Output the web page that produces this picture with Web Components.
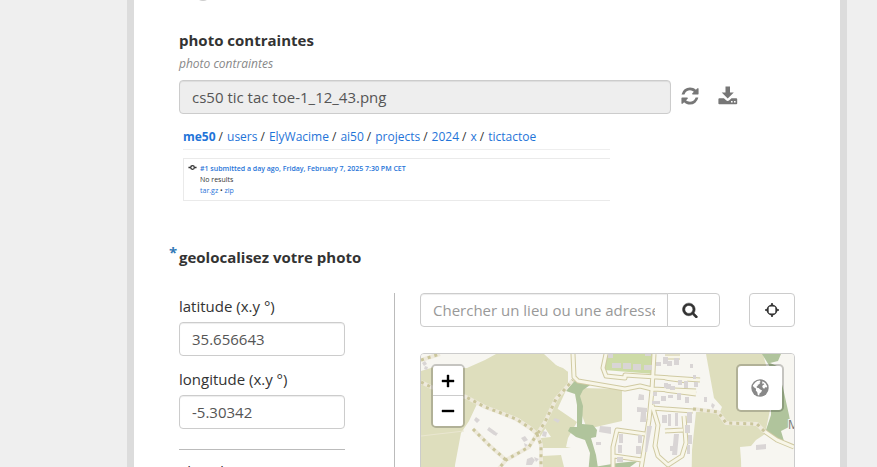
<!DOCTYPE html>
<html lang="fr">
<head>
<meta charset="utf-8">
<title>Formulaire photo</title>
<style>
html,body{margin:0;height:100%;background:#efefef}
body{font-family:"Open Sans","Noto Sans",sans-serif;font-size:15px;line-height:20px;color:#333}
</style>
</head>
<body>
<form-page>
  <photo-question></photo-question>
  <geo-question></geo-question>
</form-page>
<script>
const define=(name,html)=>customElements.define(name,class extends HTMLElement{
  constructor(){super();const t=document.createElement('template');
    t.innerHTML='<style>*{box-sizing:border-box}</style>'+html;
    this.attachShadow({mode:'open'}).append(t.content.cloneNode(true));}
});

const ICONS={
refresh:['0 0 1792 1792','<path d="M1639 1056q0 5-1 7-64 268-268 434.5T892 1664q-146 0-282.500-55T366 1452l-129 129q-19 19-45 19t-45-19-19-45v-448q0-26 19-45t45-19h448q26 0 45 19t19 45-19 45l-137 137q71 66 161 102t187 36q134 0 250-65t186-179q11-17 53-117 8-23 30-23h192q13 0 22.500 9.500t9.500 22.500zm25-800v448q0 26-19 45t-45 19h-448q-26 0-45-19t-19-45 19-45l138-138Q1097 384 896 384q-134 0-250 65T460 628q-11 17-53 117-8 23-30 23H178q-13 0-22.500-9.500T146 736v-7q65-268 270-434.500T896 128q146 0 284 55.500T1425 340l130-129q19-19 45-19t45 19 19 45z"/>'],
download:['0 0 20 20','<path d="M7.500 .5h4.500V6.500h3.800L9.700 12.500 3.700 6.500h3.800z"/><path fill-rule="evenodd" d="M1.400 12.300h4.500l2.200 2q1.600 1.200 3.200 0l2.200-2h4.700q1 0 1 1v4.200q0 .8-1 .8H1.400q-1 0-1-.8v-4.200q0-1 1-1zM13 15v1.400h1.600V15zM16 15v1.400h1.600V15z"/>'],
search:['0 0 1792 1792','<path stroke="currentColor" stroke-width="60" d="M1216 832q0-185-131.500-316.500T768 384 451.500 515.500 320 832t131.500 316.500T768 1280t316.500-131.500T1216 832zm512 832q0 52-38 90t-90 38q-54 0-90-38l-343-342q-179 124-399 124-143 0-273.500-55.500t-225-150-150-225T64 832t55.500-273.500 150-225 225-150T768 128t273.500 55.500 225 150 150 225T1472 832q0 220-124 399l343 343q37 37 37 90z"/>'],
locate:['0 0 16 16','<circle cx="8" cy="8" r="4.700" fill="none" stroke="currentColor" stroke-width="1.500"/><path d="M7.200 1h1.600v1.400L10.200 4v.6H5.800V4l1.400-1.600zM7.200 15h1.600v-1.400l1.400-1.600v-.6H5.800v.6l1.400 1.600zM1 7.200v1.600h1.400L4 10.200h.6V5.800H4L2.400 7.200zM15 7.200v1.600h-1.400L12 10.200h-.6V5.800h.6l1.600 1.400z"/>'],
globe:['0 0 18 18','<circle cx="9" cy="9" r="8.700"/><path fill="#fff" d="M4.200 3.600 6.200 2l2.500-.5 1 .8-1.300.9 1 .6-1.500 1.600-1.300.4.300 1-1.300.7.300 1.300 1.700.3 1.600 1.300 1.800.8-.8 2-1.500 1-.6 2.400-1.300-.6-.5-2.800-1.500-1.800.3-1.700L2.600 8 1.800 6.500zM11.500 2.200l2.800 1.700 1.900 3.400-.5 1.200-1.600-.2-.8 1.400-1.400-.7-.7-1.800.8-1.300 1.400-.5-1.100-1.100-1.300.4z"/>'],
commit:['0 0 10 10','<circle cx="5" cy="5" r="2" fill="none" stroke="currentColor" stroke-width="1.400"/><path d="M.5 4.300h2.500v1.400H.5zM7 4.300h2.500v1.400H7z"/>']
};
customElements.define('form-icon',class extends HTMLElement{
  connectedCallback(){const [box,shape]=ICONS[this.getAttribute('name')];
    const root=this.shadowRoot||this.attachShadow({mode:'open'});
    root.innerHTML=`<style>:host{display:inline-flex;width:var(--size,16px);height:var(--size,16px);flex:none}svg{width:100%;height:100%;fill:currentColor}</style><svg viewBox="${box}" aria-hidden="true">${shape}</svg>`;}
});

define('form-page',`<style>
:host{display:block;height:100vh;overflow:hidden;padding:0 30px 0 127px}
main{background:#fff;border:solid #dcdcdc;border-width:0 7px;padding:0 45px;min-height:100%}
.drop{display:block;width:16px;height:16px;margin:-15px 0 0 16px;border-radius:50%;background:#ccc}
</style><main><span class="drop"></span><slot></slot></main>`);

define('photo-question',`<style>
:host{display:block;padding-top:29px}
label{display:block;font-weight:700}
.hint{font-size:12px;font-style:italic;color:#888;line-height:16px;margin-top:6px}
.row{display:flex;align-items:center;margin-top:8px}
input{flex:1;min-width:0;height:34px;padding:0 12px;border:1px solid #ccc;border-radius:4px;background:#eee;font:inherit;color:#555;box-shadow:inset 0 1px 1px #00000013}
button{border:0;background:none;padding:0;color:#777;display:flex;width:20px;--size:20px}
.refresh{margin:-2px 0 0 9px}.download{margin:-3px 57px 0 18px}
</style>
<label for="file">photo contraintes</label>
<div class="hint">photo contraintes</div>
<div class="row"><input id="file" readonly value="cs50 tic tac toe-1_12_43.png">
<button class="refresh" aria-label="Réinitialiser"><form-icon name="refresh"></form-icon></button>
<button class="download" aria-label="Télécharger"><form-icon name="download"></form-icon></button></div>
<photo-preview></photo-preview>`);

define('photo-preview',`<style>
:host{display:block;margin:12px 185px 0 4px;color:#333}
a{color:#1f74d8;text-decoration:none}
nav{display:flex;font-size:12px;line-height:20px;padding-top:1px;height:24px;border-bottom:1px solid #eee;white-space:nowrap}
nav span{margin:0 4px 0 3px}
nav a:first-child{font-weight:700}
.title{font-weight:600}
.card{display:flex;gap:3px;margin-top:8px;border:solid #eaeaea;border-width:1px 0 1px 1px;height:43px;padding:4px;font-size:7px;line-height:11px;white-space:nowrap}
form-icon{--size:9px}
.card div div{height:11px}
</style>
<nav><a href="#">me50</a><span>/</span><a href="#">users</a><span>/</span><a href="#">ElyWacime</a><span>/</span><a href="#">ai50</a><span>/</span><a href="#">projects</a><span>/</span><a href="#">2024</a><span>/</span><a href="#">x</a><span>/</span><a href="#">tictactoe</a></nav>
<div class="card"><form-icon name="commit"></form-icon><div>
<div><a class="title" href="#">#1 submitted a day ago, Friday, February 7, 2025 7:30 PM CET</a></div>
<div>No results</div><div><a href="#">tar.gz</a> • <a href="#">zip</a></div></div></div>`);

define('geo-question',`<style>
:host{display:block;margin-top:46px}
h2{position:relative;margin:0;font-size:15px;line-height:20px;font-weight:700}
h2 span{position:absolute;left:-10px;top:-5px;color:#337ab7}
.grid{display:grid;grid-template-columns:216px 1fr;gap:25px;margin-top:26px}
.fields{border-right:1px solid #bbb;padding:3px 49px 0 0;height:280px}
label{display:block;margin-bottom:6px}
input{width:100%;min-width:0;height:34px;padding:0 12px;border:1px solid #ccc;border-radius:4px;background:#fff;font:inherit;color:#555;box-shadow:inset 0 1px 1px #00000013}
.fields input{display:block;margin-bottom:13px}
.fields .last{margin-top:20px;padding-top:11px;border-top:1px solid #bbb}
.search{display:flex}
.search input{flex:1;border-radius:4px 0 0 4px}
input::placeholder{color:#999;opacity:1}
button{display:flex;align-items:center;justify-content:center;height:34px;border:1px solid #ccc;background:#fff;color:#333;padding:0}
.find{width:53px;margin-left:-1px;border-radius:0 4px 4px 0;padding-right:8px}
.locate{width:46px;margin-left:29px;border-radius:4px}
</style>
<h2><span>*</span>geolocalisez votre photo</h2>
<div class="grid"><div class="fields">
<label for="lat">latitude (x.y °)</label><input id="lat" value="35.656643">
<label for="lon">longitude (x.y °)</label><input id="lon" value="-5.30342">
<div class="last"><label for="alt">altitude (m)</label><input id="alt"></div></div>
<div class="side"><div class="search"><input aria-label="Chercher un lieu" placeholder="Chercher un lieu ou une adresse">
<button class="find" aria-label="Chercher"><form-icon name="search"></form-icon></button>
<button class="locate" aria-label="Me localiser"><form-icon name="locate"></form-icon></button></div>
<map-view></map-view></div></div>`);

const ROADS='M573 354 574 377 578 381 625 389 640 386 652 389 696 391M606 354 603 368 606 376 625 378 625 375 700 380M654 354 652 390 649 420 640 475M665 357 680 357M665 378 687 381M665 390 696 394M613 475V447L617 430 645 434M614 456 642 460M652 405 658 425 655 446 658 456 668 465 682 456 686 443 684 416M652 408 693 411M665 431 683 430M764 431 777 440 794 447';
const TRACKS='M421 382 431 387 466 397 485 407 501 413 516 419 530 428 537 434 529 447 506 460 491 478M421 360 440 354M473 429 490 446 506 460M537 434 541 445 541 478M538 433 545 422 556 399 573 380M693 409 718 412 726 423 757 424 765 432';
define('map-view',`<style>
:host{display:block;position:relative;margin-top:26px;height:220px;border:1px solid #ccc;border-radius:4px;overflow:hidden;background:#f7f6f1}
.map{display:block;width:100%;height:100%}
.zoom,.layers{position:absolute;top:10px;border:2px solid #00000033;background-clip:padding-box;border-radius:5px}
.zoom{left:10px;width:34px;overflow:hidden}
.zoom button{display:flex;align-items:center;justify-content:center;width:30px;height:30px;padding:0;border:0;background:#fff;color:#000}
.zoom button:first-child{border-bottom:1px solid #ccc}
.zoom svg{width:14px;height:14px}
.layers{right:10px;width:48px;height:48px;background-color:#fff;display:flex;align-items:center;justify-content:center;padding:0;color:#888;--size:18px}
</style>
<svg class="map" viewBox="421 354 373 218" preserveAspectRatio="xMinYMin slice" aria-label="Carte">
<rect x="421" y="354" width="373" height="218" fill="#f7f6f1"/>
<g fill="#dedebd">
<path d="M421 371 434 367 467 368 485 360 496 354H544L556 365 568 372 565 384 552 406 538 433 520 419 503 412 477 404 469 421 461 433 455 465 451 572H421z"/>
<path d="M540 354 548 363 563 368 568 372 568 386 557 410 540 437z"/>
<path d="M580 388 622 389V421L587 429 580 410z"/>
<path d="M555 407 577 422 568 438 566 447 571 448 542 448 541 438 551 437 545 428z"/>
<path d="M543 456 561 455 566 475 543 475z"/>
<path d="M706 354H763L770 380 770 410 765 434 756 440 751 446 740 447 741 460 744 572H690L692 450 696 412H720L722 407 714 398z"/>
</g>
<path fill="#cddba6" d="M608 354H654V374L604 370z"/>
<g fill="#b0c49c"><path d="M566 391 574 381 593 383 583 390 580 396 583 406 582 424 593 425 597 430 596 437 591 438 596 455 599 475H588L590 453 585 440 576 437 568 431 570 427 577 427 577 405 575 394z"/>
<path d="M762 354H781L778 361 770 363 777 366 783 388 789 415 791 426 781 431 784 441 765 433 771 415 770 367z"/>
<path d="M594 467 618 463 638 461 630 467z"/></g>
<g fill="none" stroke-linejoin="round">
<path stroke="#d0caa2" stroke-width="5" d="${ROADS}"/>
<path stroke="#f8f6e8" stroke-width="3" d="${ROADS}"/>
<path stroke="#eeeadc" stroke-width="4" d="${TRACKS}"/>
<path stroke="#cbc69c" stroke-width="3" stroke-dasharray="3 4" d="${TRACKS}"/>
<path stroke="#e9e6d0" d="M421 436 464 431"/></g>
<g fill="#d9d5d5">
<path d="m422 363 3-2 2 3-3 2zM425 366l3 1-1 3-3-1zM476 417l4 3-3 3-3-3zM489 427l7 5-2 3-7-5zM495 432l3 1-2 3-3-2zM521 438l4-2 3 4-4 2zM524 443l4 2-3 2zM527 459l5-2 3 3-3 5h-6zM534 457l5 2-3 3zM555 418l5 2-2 3-5-3zM543 431l4 1-1 5-4-1zM600 426l11 1v7l-12-2zM596 442h5v3h-5zM617 457h6v5h-6z"/>
<path d="M612 363h9v5h-9zM623 363h8v6h-8zM633 364h8v6h-8zM644 365h8v5h-8zM608 354h5v4h-5zM645 354h6v2h-6zM639 394l5 1v5h-6zM637 407l10 1v4h-10zM641 412h5v10h-6zM656 362h5v4h-5zM663 357h5v7h-5zM664 383h4v5h-4zM653 392h4v4h-4zM661 396h5v5h-5zM652 401h8v3h-8zM647 426h5l-5 26h-2zM619 434h4v9h-4zM618 445h4v8h-4zM638 435h4v8h-4zM636 446h5v8h-5zM662 415h5v8h-5zM690 364h3v4h-3zM667 361h5v5h-5zM674 358h5v7h-5zM670 386h5v4h-5zM678 380h4v5h-4zM684 381h4v7h-4zM693 375h3v4h-3zM694 382h4v5h-4zM668 395h5v3h-5zM677 393h4v7h-4zM685 397h4v6h-4zM704 397h3v5h-3zM712 403l3 2-2 4-2-3zM668 414h3v12h-3zM675 413h3v13h-3zM687 412h5v11h-5zM685 425h5v8h-5zM688 435h4v9h-4zM674 434h5l-2 21h-5zM670 446h5v5h-5zM687 445h3v9h-3zM666 384h5v5h-5zM756 445l10-1v5l-10 1z"/></g>
<text x="788" y="429" font-size="12" fill="#777" stroke="#f7f6f1" stroke-width="2" paint-order="stroke">M</text>
</svg>
<div class="zoom"><button aria-label="Zoom avant"><svg viewBox="0 0 14 14"><path d="M6 1h2v5h5v2H8v5H6V8H1V6h5z" stroke="#000" stroke-width=".4"/></svg></button><button aria-label="Zoom arrière"><svg viewBox="0 0 14 14"><path d="M1 6h12v2H1z" stroke="#000" stroke-width=".4"/></svg></button></div>
<button class="layers" aria-label="Fonds de carte"><form-icon name="globe"></form-icon></button>`);
</script>
</body>
</html>
